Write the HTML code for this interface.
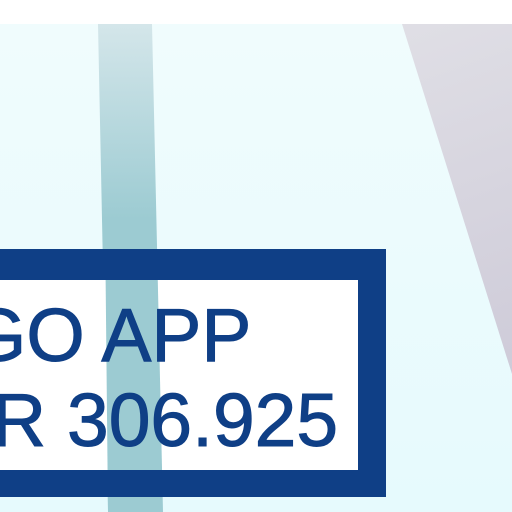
<!DOCTYPE html>
<html><head><style>
body{margin:0;width:512px;height:512px;overflow:hidden;position:relative;background:#fff;font-family:"Liberation Sans",sans-serif}
.bg{position:absolute;left:0;top:24px;width:512px;height:488px;background:linear-gradient(#f0fcfd,#e6fafd)}
.band{position:absolute;top:24px;left:0;width:512px;height:488px;background:linear-gradient(#d4e6ea,#9ccbd2 40%,#9ccbd2);clip-path:polygon(98px 0,152px 0,163px 488px,108px 488px)}
.tri{position:absolute;top:24px;left:0;width:512px;height:488px;background:linear-gradient(160deg,#e6e6ea,#c8c4d4);clip-path:polygon(402px 0,512px 0,512px 350px)}
.outer{position:absolute;left:0;top:249px;width:386px;height:248px;background:#0f3f86}
.inner{position:absolute;left:0;top:280px;width:358px;height:190px;background:#fff;overflow:hidden}
.band2{position:absolute;left:0;top:-256px;width:512px;height:488px;background:#9ccbd2;clip-path:polygon(103px 0,152px 0,163px 488px,108px 488px)}
.t{position:absolute;color:#0f3f86;font-size:75px;white-space:nowrap;line-height:1;-webkit-text-stroke:1px #0f3f86}
</style></head><body>
<div class="bg"></div><div class="band"></div><div class="tri"></div>
<div class="outer"></div>
<div class="inner"><div class="band2"></div>
<div class="t" style="left:-32px;top:18px">GO APP</div>
<div class="t" style="left:-8px;top:103px">R 306.925</div>
</div>
</body></html>
